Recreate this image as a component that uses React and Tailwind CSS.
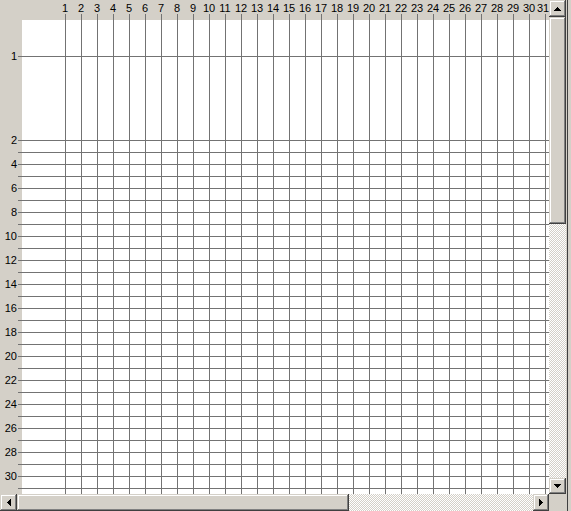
import React from 'react';

// colonnes 1..31 en haut, lignes 2..31 à gauche (les paires ont un libellé)
const cols = Array.from({ length: 31 }, (_, i) => i + 1);
const rows = Array.from({ length: 30 }, (_, i) => i + 2);

const bevel =
  'bg-[#d4d0c8] shadow-[inset_-1px_-1px_0_#404040,inset_1px_1px_0_#d4d0c8,inset_-2px_-2px_0_#808080,inset_2px_2px_0_#ffffff]';
const track = 'bg-[repeating-conic-gradient(#ffffff_0_25%,#d4d0c8_0_50%)] bg-[length:2px_2px]';
const colLines = 'bg-[linear-gradient(to_right,#737373_1px,transparent_1px)] bg-[length:16px_100%]';

const arrows = {
  up: { w: 7, h: 4, d: 'M3 0h1v1h1v1h1v1h1v1H0V3h1V2h1V1h1z' },
  down: { w: 7, h: 4, d: 'M0 0h7v1H6v1H5v1H4v1H3V3H2V2H1V1H0z' },
  left: { w: 4, h: 7, d: 'M0 3h1V2h1V1h1V0h1v7H3V6H2V5H1V4H0z' },
  right: { w: 4, h: 7, d: 'M4 3H3V2H2V1H1V0H0v7h1V6h1V5h1V4h1z' },
};

const ScrollButton = ({ dir, className }) => {
  const a = arrows[dir];
  return (
    <div className={`flex shrink-0 items-center justify-center ${bevel} ${className}`}>
      <svg width={a.w} height={a.h} viewBox={`0 0 ${a.w} ${a.h}`} shapeRendering="crispEdges">
        <path d={a.d} fill="#000" />
      </svg>
    </div>
  );
};

const RulerCell = ({ label }) => (
  <div className="flex h-[12px] shrink-0 justify-end">
    <span className="leading-[12px]">{label}</span>
    <div className="ml-[1px] mt-[6px] h-px w-[4px] bg-[#737373]" />
  </div>
);

const GridRow = ({ className }) => (
  <div className={`flex shrink-0 ${className}`}>
    <div className="w-[43px] shrink-0" />
    <div className={`flex-1 ${colLines}`} />
  </div>
);

const App = () => {
  return (
    <div className="flex h-[511px] w-[571px] overflow-hidden bg-[#d4d0c8] font-['Liberation_Sans',Arial,sans-serif] text-[11px] text-black">
      <div className="flex w-[549px] shrink-0 flex-col">
        {/* règle du haut */}
        <div className="flex h-[20px] shrink-0 overflow-hidden">
          <div className="w-[57px] shrink-0" />
          {cols.map((c) => (
            <div key={c} className="flex w-[16px] shrink-0 flex-col">
              <span className={`whitespace-nowrap pt-[3px] leading-[11px] ${c === 31 ? 'text-left' : 'text-center'}`}>
                {c}
              </span>
              <div className="ml-[8px] w-px flex-1 bg-[#737373]" />
            </div>
          ))}
        </div>

        <div className="flex h-[474px] shrink-0">
          {/* règle de gauche */}
          <div className="flex w-[22px] shrink-0 flex-col">
            <div className="h-[30px] shrink-0" />
            <RulerCell label="1" />
            <div className="h-[72px] shrink-0" />
            {rows.map((r) => (
              <RulerCell key={r} label={r % 2 === 0 ? r : ''} />
            ))}
          </div>

          {/* grille */}
          <div className="flex flex-1 flex-col bg-white">
            <GridRow className="h-[37px] border-b border-[#737373]" />
            <GridRow className="h-[84px] border-b border-[#737373]" />
            {rows.slice(1).map((r) => (
              <GridRow key={r} className="h-[12px] border-b border-[#737373]" />
            ))}
            <GridRow className="flex-1" />
          </div>
        </div>

        {/* barre horizontale */}
        <div className="flex h-[17px] shrink-0">
          <ScrollButton dir="left" className="w-[17px]" />
          <div className={`w-[332px] shrink-0 ${bevel}`} />
          <div className={`flex-1 ${track}`} />
          <ScrollButton dir="right" className="w-[16px]" />
        </div>
      </div>

      {/* barre verticale */}
      <div className="flex w-[17px] shrink-0 flex-col">
        <ScrollButton dir="up" className="h-[17px]" />
        <div className={`h-[207px] shrink-0 ${bevel}`} />
        <div className={`flex-1 ${track}`} />
        <ScrollButton dir="down" className="h-[16px]" />
        <div className="h-[17px] shrink-0" />
      </div>

      <div className="w-px shrink-0 bg-[#d4d0c8]" />
      <div className="w-px shrink-0 bg-[#404040]" />
      <div className="flex-1" />
    </div>
  );
};

export default App;
